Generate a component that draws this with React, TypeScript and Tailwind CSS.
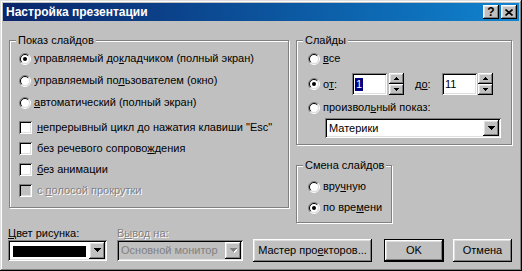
import React from "react";

const raised =
  "shadow-[inset_-1px_-1px_0_#000,inset_1px_1px_0_#fff,inset_-2px_-2px_0_#808080,inset_2px_2px_0_#dfdfdf]";
const sunken =
  "shadow-[inset_1px_1px_0_#808080,inset_-1px_-1px_0_#fff,inset_2px_2px_0_#000,inset_-2px_-2px_0_#dfdfdf]";

const Radio = ({ checked }: { checked?: boolean }) => (
  <svg width="12" height="12" viewBox="0 0 12 12" className="shrink-0">
    <circle cx="6" cy="6" r="4.5" fill="#fff" />
    <path d="M2.1 9.9A5.5 5.5 0 0 1 9.9 2.1" stroke="#808080" fill="none" />
    <path d="M9.9 2.1A5.5 5.5 0 0 1 2.1 9.9" stroke="#fff" fill="none" />
    <path d="M2.8 9.2A4.5 4.5 0 0 1 9.2 2.8" stroke="#000" fill="none" />
    <path d="M9.2 2.8A4.5 4.5 0 0 1 2.8 9.2" stroke="#dfdfdf" fill="none" />
    {checked && <circle cx="6" cy="6" r="2" fill="#000" />}
  </svg>
);

const Check = ({ disabled }: { disabled?: boolean }) => (
  <span
    className={`block w-[13px] h-[13px] shrink-0 ${sunken} ${
      disabled ? "bg-[#c0c0c0]" : "bg-white"
    }`}
  />
);

const Arrow = ({ grey, up }: { grey?: boolean; up?: boolean }) => (
  <svg width="7" height="5" viewBox="0 0 7 5" shapeRendering="crispEdges">
    {grey && (
      <g fill="#fff" transform="translate(1 1)">
        <rect x="0" y="0" width="7" height="1" />
        <rect x="1" y="1" width="5" height="1" />
        <rect x="2" y="2" width="3" height="1" />
        <rect x="3" y="3" width="1" height="1" />
      </g>
    )}
    <g fill={grey ? "#808080" : "#000"} transform={up ? "rotate(180 3.5 2)" : undefined}>
      <rect x="0" y="0" width="7" height="1" />
      <rect x="1" y="1" width="5" height="1" />
      <rect x="2" y="2" width="3" height="1" />
      <rect x="3" y="3" width="1" height="1" />
    </g>
  </svg>
);

const SmallArrow = ({ up }: { up?: boolean }) => (
  <svg width="5" height="3" viewBox="0 0 5 3" shapeRendering="crispEdges" fill="#000">
    {up ? (
      <>
        <rect x="2" y="0" width="1" height="1" />
        <rect x="1" y="1" width="3" height="1" />
        <rect x="0" y="2" width="5" height="1" />
      </>
    ) : (
      <>
        <rect x="0" y="0" width="5" height="1" />
        <rect x="1" y="1" width="3" height="1" />
        <rect x="2" y="2" width="1" height="1" />
      </>
    )}
  </svg>
);

const DropBtn = ({ grey }: { grey?: boolean }) => (
  <div className={`w-[16px] h-full bg-[#c0c0c0] ${raised} flex items-center justify-center`}>
    <Arrow grey={grey} />
  </div>
);

const Spinner = () => (
  <div className="flex flex-col w-[15px] h-[22px]">
    <div className={`h-[11px] bg-[#c0c0c0] ${raised} flex items-center justify-center`}>
      <SmallArrow up />
    </div>
    <div className={`h-[11px] bg-[#c0c0c0] ${raised} flex items-center justify-center`}>
      <SmallArrow />
    </div>
  </div>
);

const Group = ({
  label,
  className,
  children,
}: {
  label: string;
  className: string;
  children: React.ReactNode;
}) => (
  <div
    className={`relative border border-[#808080] shadow-[1px_1px_0_#fff,inset_1px_1px_0_#fff] ${className}`}
  >
    <span className="absolute left-[6px] -top-[8px] bg-[#c0c0c0] px-[2px] leading-[14px]">
      {label}
    </span>
    {children}
  </div>
);

const RadioRow = ({
  checked,
  className = "",
  children,
}: {
  checked?: boolean;
  className?: string;
  children: React.ReactNode;
}) => (
  <div className={`flex items-center gap-[3px] h-[21px] ${className}`}>
    <Radio checked={checked} />
    <span>{children}</span>
  </div>
);

const CheckRow = ({
  disabled,
  className = "",
  children,
}: {
  disabled?: boolean;
  className?: string;
  children: React.ReactNode;
}) => (
  <div className={`flex items-center gap-[5px] h-[21px] ${className}`}>
    <Check disabled={disabled} />
    <span className={disabled ? "text-[#808080] [text-shadow:1px_1px_0_#fff]" : ""}>
      {children}
    </span>
  </div>
);

const TitleBtn = ({ children, className = "" }: { children: React.ReactNode; className?: string }) => (
  <div
    className={`w-[16px] h-[14px] bg-[#c0c0c0] ${raised} flex items-center justify-center ${className}`}
  >
    {children}
  </div>
);

export default function App() {
  return (
    <div className="w-[522px] h-[271px] bg-[#c0c0c0] p-[3px] flex flex-col font-['Liberation_Sans',Arial,sans-serif] text-[11px] text-black leading-[13px] shadow-[inset_-1px_-1px_0_#000,inset_1px_1px_0_#dfdfdf,inset_-2px_-2px_0_#808080,inset_2px_2px_0_#fff]">
      {/* title bar */}
      <div className="h-[18px] shrink-0 flex items-center bg-linear-to-r from-[#0a246a] to-[#1084d0] pl-[3px] pr-[2px]">
        <span className="flex-1 text-white font-bold text-[12px]">Настройка презентации</span>
        <TitleBtn>
          <span className="font-bold text-[12px] leading-[12px] -mt-[1px]">?</span>
        </TitleBtn>
        <TitleBtn className="ml-[2px]">
          <svg width="8" height="7" viewBox="0 0 8 7">
            <path d="M0.5 0.5L7.5 6.5M7.5 0.5L0.5 6.5" stroke="#000" strokeWidth="1.6" />
          </svg>
        </TitleBtn>
      </div>

      <div className="flex-1 pl-[6px] pt-[19px]">
        <div className="flex">
          <Group label="Показ слайдов" className="w-[280px] h-[168px] pl-[9px] pt-[7px]">
            <RadioRow checked>
              управляемый до<u>к</u>ладчиком (полный экран)
            </RadioRow>
            <RadioRow className="mt-[1px]">
              управляемый по<u>л</u>ьзователем (окно)
            </RadioRow>
            <RadioRow className="mt-[1px]">
              <u>а</u>втоматический (полный экран)
            </RadioRow>
            <CheckRow className="mt-[4px]">
              <u>н</u>епрерывный цикл до нажатия клавиши "Esc"
            </CheckRow>
            <CheckRow>
              без речевого сопрово<u>ж</u>дения
            </CheckRow>
            <CheckRow>
              <u>б</u>ез анимации
            </CheckRow>
            <CheckRow disabled>
              с <u>п</u>олосой прокрутки
            </CheckRow>
          </Group>

          <div className="ml-[7px] flex flex-col">
            <Group label="Слайды" className="w-[216px] h-[105px] pl-[11px] pt-[7px]">
              <RadioRow>
                <u>в</u>се
              </RadioRow>
              <div className="flex items-center h-[22px] mt-[4px]">
                <Radio checked />
                <span className="ml-[3px] w-[29px]">
                  о<u>т</u>:
                </span>
                <div className={`w-[35px] h-[22px] bg-white ${sunken} pl-[3px] flex items-center`}>
                  <span className="bg-[#000080] text-white px-[1px]">1</span>
                </div>
                <div className="ml-[2px]">
                  <Spinner />
                </div>
                <span className="ml-[11px] w-[27px]">
                  д<u>о</u>:
                </span>
                <div className={`w-[35px] h-[22px] bg-white ${sunken} pl-[3px] flex items-center`}>
                  11
                </div>
                <div className="ml-[1px]">
                  <Spinner />
                </div>
              </div>
              <RadioRow className="mt-[2px]">
                произвол<u>ь</u>ный показ:
              </RadioRow>
              <div className={`ml-[17px] w-[176px] h-[20px] bg-white ${sunken} p-[2px] flex`}>
                <span className="flex-1 pl-[2px] leading-[16px]">Материки</span>
                <DropBtn />
              </div>
            </Group>

            <Group label="Смена слайдов" className="w-[96px] h-[58px] mt-[20px] pl-[11px] pt-[10px]">
              <RadioRow>
                вру<u>ч</u>ную
              </RadioRow>
              <RadioRow checked>
                по вре<u>м</u>ени
              </RadioRow>
            </Group>
          </div>
        </div>

        {/* bottom row */}
        <div className="flex items-start -ml-[1px] mt-[3px]">
          <div className="w-[99px] flex flex-col">
            <span className="leading-[14px]">
              <u>Ц</u>вет рисунка:
            </span>
            <div className={`h-[21px] bg-white ${sunken} p-[2px] flex`}>
              <div className="flex-1 pl-[3px] pr-[3px] pt-[4px] pb-[2px]">
                <div className="h-full bg-black" />
              </div>
              <DropBtn />
            </div>
          </div>
          <div className="w-[126px] ml-[10px] flex flex-col">
            <span className="leading-[14px] text-[#808080] [text-shadow:1px_1px_0_#fff]">
              В<u>ы</u>вод на:
            </span>
            <div className={`h-[21px] bg-[#c0c0c0] ${sunken} p-[2px] flex`}>
              <span className="flex-1 pl-[2px] leading-[17px] text-[#808080]">Основной монитор</span>
              <DropBtn grey />
            </div>
          </div>
          <div
            className={`ml-[10px] mt-[13px] w-[119px] h-[23px] bg-[#c0c0c0] ${raised} flex items-center justify-center`}
          >
            Мастер про<u>е</u>кторов...
          </div>
          <div className="ml-[12px] mt-[13px] w-[60px] h-[23px] border border-black">
            <div className={`w-full h-full bg-[#c0c0c0] ${raised} flex items-center justify-center`}>
              OK
            </div>
          </div>
          <div
            className={`ml-[9px] mt-[13px] w-[59px] h-[23px] bg-[#c0c0c0] ${raised} flex items-center justify-center`}
          >
            Отмена
          </div>
        </div>
      </div>
    </div>
  );
}
